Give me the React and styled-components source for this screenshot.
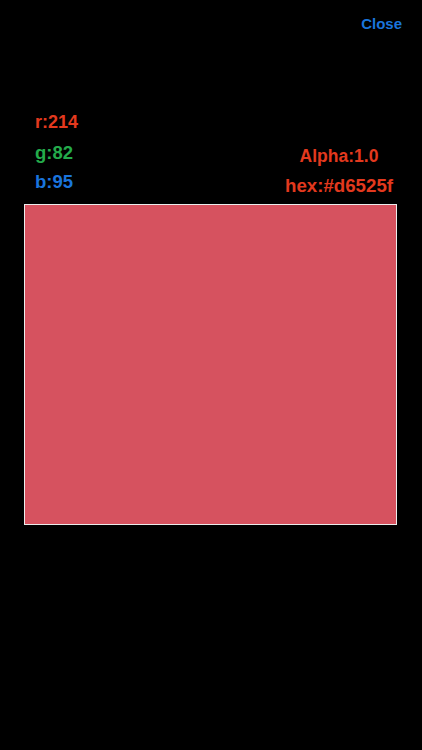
import React from "react";
import styled, { createGlobalStyle } from "styled-components";

const Global = createGlobalStyle`
  html, body { margin: 0; padding: 0; background: #000; }
  body { font-family: "Liberation Sans", Arial, sans-serif; -webkit-font-smoothing: antialiased; }
`;

const Page = styled.div`
  width: 422px;
  height: 750px;
  background: #000;
  display: flex;
  flex-direction: column;
`;

const Header = styled.div`
  height: 46px;
  display: flex;
  justify-content: flex-end;
  align-items: center;
  padding-right: 20px;
`;

const CloseButton = styled.button`
  background: none;
  border: none;
  padding: 0;
  font-family: inherit;
  font-weight: 700;
  font-size: 15px;
  color: #1a74dc;
  cursor: pointer;
`;

const Content = styled.div`
  margin-left: 24px;
  width: 373px;
  display: flex;
  flex-direction: column;
`;

const Info = styled.div`
  margin-top: 62px;
  display: flex;
  justify-content: space-between;
  align-items: flex-start;
`;

const LeftCol = styled.div`
  padding-left: 11px;
  display: flex;
  flex-direction: column;
`;

const RightCol = styled.div`
  width: 116px;
  padding-top: 33.5px;
  display: flex;
  flex-direction: column;
  align-items: center;
`;

const Label = styled.div`
  font-weight: 700;
  font-size: ${(p) => p.$size || 18}px;
  line-height: ${(p) => p.$lh || 29.5}px;
  color: ${(p) => p.$color};
  white-space: nowrap;
`;

const Swatch = styled.div`
  margin-top: 4.5px;
  height: 321px;
  box-sizing: border-box;
  border: 1px solid #ececec;
  background: ${(p) => p.$color};
`;

const RED = "#e3391e";
const GREEN = "#24ab4b";
const BLUE = "#1a74dc";

export default function App() {
  const r = 214, g = 82, b = 95;
  const hex = "#" + [r, g, b].map((v) => v.toString(16).padStart(2, "0")).join("");
  return (
    <>
      <Global />
      <Page>
        <Header>
          <CloseButton>Close</CloseButton>
        </Header>
        <Content>
          <Info>
            <LeftCol>
              <Label $color={RED}>r:{r}</Label>
              <Label $color={GREEN} $size={18.5}>g:{g}</Label>
              <Label $color={BLUE} $size={18.5}>b:{b}</Label>
            </LeftCol>
            <RightCol>
              <Label $color={RED} $size={17.5} $lh={29}>Alpha:1.0</Label>
              <Label $color={RED} $size={18.7} $lh={29}>hex:{hex}</Label>
            </RightCol>
          </Info>
          <Swatch $color={hex} />
        </Content>
      </Page>
    </>
  );
}
